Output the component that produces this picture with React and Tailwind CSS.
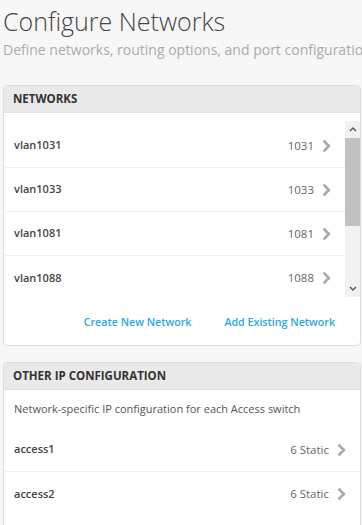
import React from 'react';

const Chevron = () => (
  <svg width="9" height="14" viewBox="0 0 9 14" className="shrink-0">
    <path d="M1.6 1.6 L6.8 7 L1.6 12.4" fill="none" stroke="#acacac" strokeWidth="2.8" />
  </svg>
);

const Row = ({ name, value, last }) => (
  <div className={`h-[44px] flex items-center pl-[10px] pr-[14px] ${last ? '' : 'border-b border-[#f0f0f0]'}`}>
    <span className="font-semibold text-[11px] text-[#444]">{name}</span>
    <span className="ml-auto text-[11.5px] text-[#666] mr-[8px]">{value}</span>
    <Chevron />
  </div>
);

const networks = [
  { name: 'vlan1031', value: '1031' },
  { name: 'vlan1033', value: '1033' },
  { name: 'vlan1081', value: '1081' },
  { name: 'vlan1088', value: '1088' },
];

const App = () => {
  return (
    <div className="w-[362px] h-[525px] overflow-hidden bg-[#f7f7f7] font-['Open_Sans',sans-serif]">
      <div className="ml-[3px] w-[358px]">
        {/* --- HEADER --- */}
        <h1 className="pt-[3px] text-[25px] leading-[36px] font-light text-[#454545] whitespace-nowrap">Configure Networks</h1>
        <p className="mt-[1px] text-[14px] leading-[20px] text-[#ababab] whitespace-nowrap">Define networks, routing options, and port configuration</p>

        {/* --- NETWORKS --- */}
        <div className="mt-[25px] bg-white border border-[#dcdcdc] rounded-[4px] overflow-hidden">
          <div className="h-[27px] bg-[#e9e9e9] flex items-center pl-[9px] border-b border-[#e2e2e2]">
            <span className="text-[11.5px] font-bold text-[#333]">NETWORKS</span>
          </div>
          <div className="pt-[8px] flex">
            <div className="flex-1 h-[179px] pt-[3px] overflow-hidden">
              {networks.map((n, i) => (
                <Row key={n.name} name={n.name} value={n.value} last={i === networks.length - 1} />
              ))}
            </div>
            {/* scrollbar */}
            <div className="w-[15px] h-[176px] bg-[#f1f1f1] flex flex-col">
              <div className="h-[17px] flex items-center justify-center">
                <svg width="8" height="5" viewBox="0 0 8 5"><path d="M1 4 L4 1 L7 4" fill="none" stroke="#555" strokeWidth="1.4" /></svg>
              </div>
              <div className="h-[88px] bg-[#c1c1c1]" />
              <div className="flex-1" />
              <div className="h-[17px] flex items-center justify-center">
                <svg width="8" height="5" viewBox="0 0 8 5"><path d="M1 1 L4 4 L7 1" fill="none" stroke="#555" strokeWidth="1.4" /></svg>
              </div>
            </div>
          </div>
          <div className="h-[45px] flex items-center justify-end gap-[33px] pr-[25px]">
            <span className="text-[10.7px] font-semibold text-[#2aa8e0]">Create New Network</span>
            <span className="text-[10.7px] font-semibold text-[#2aa8e0]">Add Existing Network</span>
          </div>
        </div>

        {/* --- OTHER IP --- */}
        <div className="mt-[16px] pb-[30px] bg-white border border-[#dcdcdc] rounded-[4px] overflow-hidden">
          <div className="h-[27px] bg-[#e9e9e9] flex items-center pl-[9px] border-b border-[#e2e2e2]">
            <span className="text-[11.5px] font-bold text-[#333]">OTHER IP CONFIGURATION</span>
          </div>
          <p className="pl-[10px] pt-[10px] pb-[10px] text-[11px] leading-[18px] text-[#555]">Network-specific IP configuration for each Access switch</p>
          <Row name="access1" value="6 Static" />
          <Row name="access2" value="6 Static" last />
        </div>
      </div>
    </div>
  );
};

export default App;
